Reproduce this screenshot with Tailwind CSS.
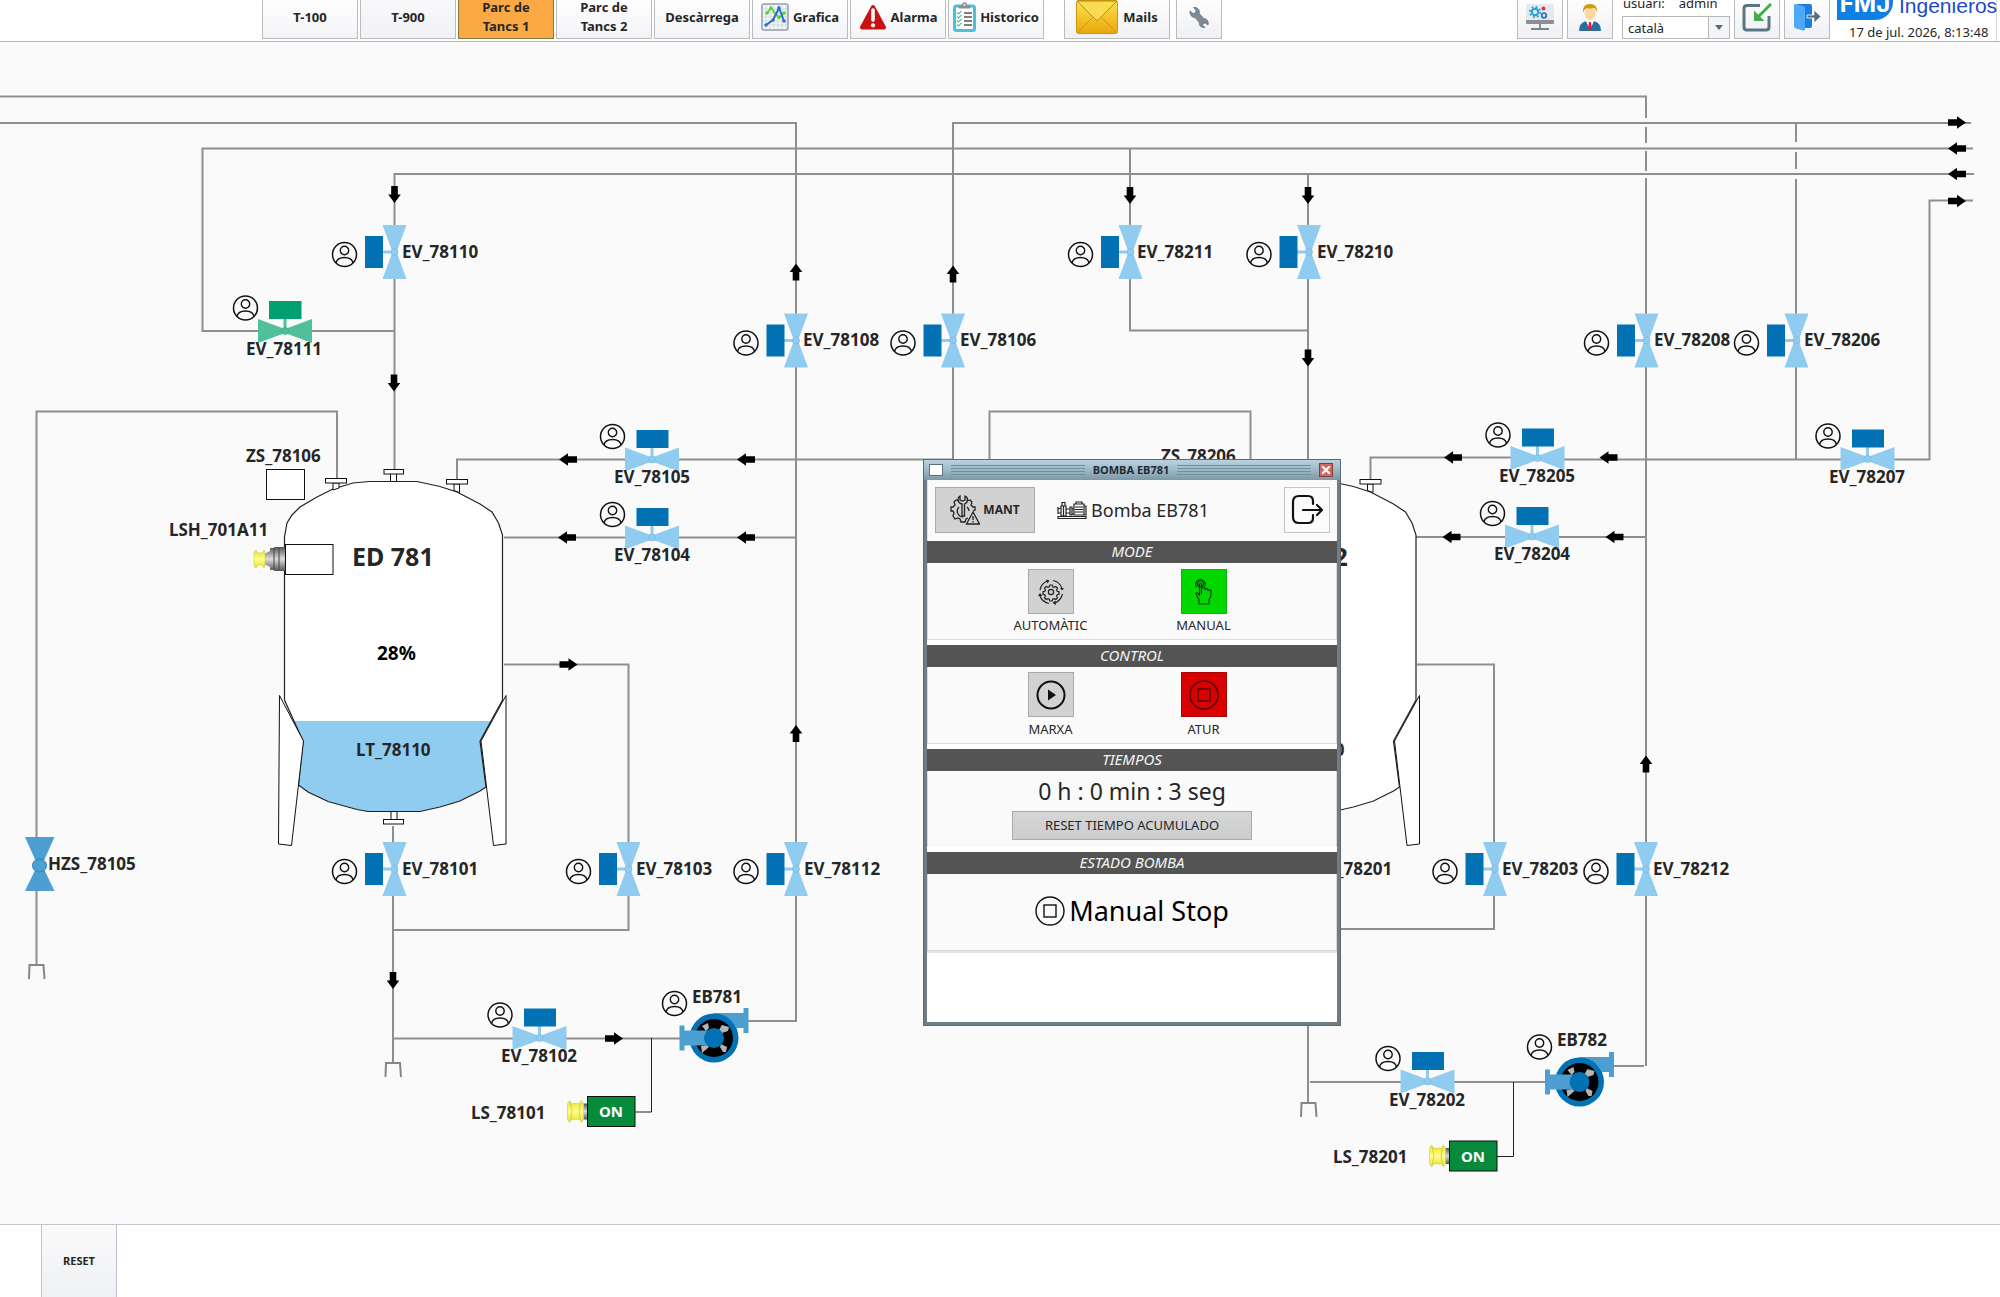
<!DOCTYPE html>
<html lang="ca">
<head>
  <meta charset="UTF-8" />
  <title>Parc de Tancs 1</title>
  <script src="https://cdn.jsdelivr.net/npm/@tailwindcss/browser@4"></script>
</head>
<body class="min-h-screen flex flex-col bg-[#fafafa] text-[#262626] font-['Noto_Sans',sans-serif] overflow-hidden">
  <!-- Top bar -->
  <header class="h-[42px] shrink-0 flex items-end bg-white border-b border-[#b4b6ba] pb-[2px] overflow-hidden">
    <nav class="flex items-end gap-[2px] pl-[262px] text-[13px] leading-[19px] font-bold">
      <button class="w-24 h-[44px] border border-[#b9bbbf] bg-linear-to-b from-white to-[#f3f4f7]">T-100</button>
      <button class="w-24 h-[44px] border border-[#b9bbbf] bg-linear-to-b from-[#fafafb] to-[#f0f1f5]">T-900</button>
      <button class="w-24 h-[44px] border border-[#7d7a3c] bg-[#fba945] px-4">Parc de Tancs 1</button>
      <button class="w-24 h-[44px] border border-[#b9bbbf] bg-linear-to-b from-white to-[#f3f4f7] px-4">Parc de Tancs 2</button>
      <button class="w-24 h-[44px] border border-[#b9bbbf] bg-linear-to-b from-white to-[#f3f4f7]">Descàrrega</button>
      <button class="w-24 h-[44px] border border-[#b9bbbf] bg-linear-to-b from-white to-[#f3f4f7] flex items-center justify-center gap-1">
        <svg class="w-7 h-7" viewBox="0 0 28 28" fill="none">
          <rect x="1" y="1" width="26" height="26" rx="2" fill="#f4f6f8" stroke="#8d9fae" stroke-width="1.5" />
          <path d="M5 2v24M9 2v24M13 2v24M17 2v24M21 2v24M25 2v24M2 6h24M2 10h24M2 14h24M2 18h24M2 22h24" stroke="#c9ced4" stroke-width=".7" />
          <path d="M6 10l4-5 8 10 5-5" stroke="#5bcf3a" stroke-width="2" />
          <path d="M5 22l7-5 6-12 5 13" stroke="#2b6fc9" stroke-width="2" />
          <g fill="#5bcf3a"><circle cx="6" cy="10" r="1.7" /><circle cx="10" cy="5" r="1.7" /><circle cx="18" cy="14" r="1.7" /><circle cx="23" cy="10" r="1.7" /></g>
          <g fill="#2b6fc9"><circle cx="5" cy="22" r="1.7" /><circle cx="12" cy="17" r="1.7" /><circle cx="18" cy="5" r="1.7" /><circle cx="23" cy="18" r="1.7" /></g>
        </svg>
        Grafica
      </button>
      <button class="w-24 h-[44px] border border-[#b9bbbf] bg-linear-to-b from-white to-[#f3f4f7] flex items-center justify-center gap-1">
        <svg class="w-7 h-7" viewBox="0 0 28 28">
          <path d="M14 4L25 24.500H3z" fill="#cc1012" stroke="#cc1012" stroke-width="4" stroke-linejoin="round" />
          <path d="M14 7v10" stroke="#fff" stroke-width="3.600" stroke-linecap="round" />
          <circle cx="14" cy="22.300" r="2.100" fill="#fff" />
        </svg>
        Alarma
      </button>
      <button class="w-24 h-[44px] border border-[#b9bbbf] bg-linear-to-b from-white to-[#f3f4f7] flex items-center justify-center gap-1">
        <svg class="w-[23px] h-[30px] shrink-0" viewBox="0 0 23 30" fill="none">
          <rect x="1.500" y="4" width="20" height="24.500" rx="2" fill="#fff" stroke="#4cbfd9" stroke-width="3" />
          <path d="M6 6V4h3l1-3h3l1 3h3v2z" fill="#8b8f94" stroke="#8b8f94" />
          <circle cx="11.500" cy="3" r="1" fill="#fff" />
          <path d="M11 11h8M11 15h8M11 19h8M11 23h8" stroke="#555" stroke-width="1.300" />
          <path d="M4 10.500l1.500 1.500 3-3M4 14.500l1.500 1.500 3-3M4 18.500l1.500 1.500 3-3M4 22.500l1.500 1.500 3-3" stroke="#52c3a2" stroke-width="1.200" />
        </svg>
        Historico
      </button>
      <button class="w-[106px] h-[44px] ml-[18px] border border-[#b9bbbf] bg-linear-to-b from-white to-[#f0f1f5] flex items-center justify-center gap-[5px]">
        <svg class="w-[42px] h-[34px] shrink-0" viewBox="0 0 42 34">
          <defs>
            <linearGradient id="mail" x1="0" y1="0" x2="0" y2="1"><stop offset="0" stop-color="#ffe14d" /><stop offset="1" stop-color="#e8a70c" /></linearGradient>
          </defs>
          <rect x=".500" y=".500" width="41" height="33" rx="2" fill="url(#mail)" stroke="#c9960e" />
          <path d="M1 33l15-15M41 33L26 18" stroke="#cf9a10" fill="none" />
          <path d="M1 1l19 19q1 .800 2 0L41 1z" fill="#f9dc52" stroke="#b98c0c" />
        </svg>
        Mails
      </button>
      <button aria-label="Configuració" class="w-[46px] h-[44px] ml-1 border border-[#b9bbbf] bg-linear-to-b from-white to-[#eff0f4] flex items-center justify-center">
        <svg class="w-[22px] h-[22px]" viewBox="0 0 22 22">
          <path d="M2 5l3 2.500 2.500-.500.500-2.500L5.500 1.500Q9 .500 11 4q.600 1.500.300 3.500l4.500 5q2.200 0 3.700 2 1.300 2 .500 4.500l-2.800-2-2 .500-.600 2 2.400 2q-3 .500-4.800-1.500-1.200-1.600-.900-3.500L7 11.500Q4.500 11.500 3 9.500 1.500 7.500 2 5z" fill="#7e8a96" stroke="#5d6873" stroke-width=".7" />
        </svg>
      </button>
    </nav>
    <div class="ml-auto flex items-end">
      <div class="flex items-end gap-1 mr-[9px]">
        <button aria-label="Sistema" class="w-[46px] h-[44px] border border-[#b9bbbf] bg-linear-to-b from-white to-[#eff0f4] flex items-center justify-center">
          <svg class="w-[30px] h-[26px]" viewBox="0 0 30 26" fill="none">
            <rect x="1" y="0" width="28" height="17" rx="1" fill="#e6e8eb" />
            <rect x="1" y="16" width="28" height="4" rx="1" fill="#8c8f93" />
            <path d="M15 20v4M6 25h18" stroke="#7d8084" stroke-width="1.800" />
            <circle cx="10" cy="8" r="3.200" stroke="#20a0e0" stroke-width="2" />
            <circle cx="10" cy="8" r="5.200" stroke="#20a0e0" stroke-width="1.800" stroke-dasharray="1.800 2.280" />
            <circle cx="19" cy="11.500" r="2.300" stroke="#2d79b5" stroke-width="1.800" />
            <circle cx="18.500" cy="4.500" r="2" fill="#e0323c" />
          </svg>
        </button>
        <button aria-label="Usuari" class="w-[46px] h-[44px] border border-[#b9bbbf] bg-linear-to-b from-white to-[#eff0f4] flex items-center justify-center">
          <svg class="w-6 h-7" viewBox="0 0 24 28">
            <path d="M1 28q0-8 6-9.500l5-1.500 5 1.500q6 1.500 6 9.500z" fill="#2b6ca5" />
            <path d="M8 18l4 9 4-9-4-3z" fill="#fff" />
            <path d="M11 19h2l1 7-2 2-2-2z" fill="#d8282f" />
            <ellipse cx="12" cy="10" rx="5.500" ry="7" fill="#fcd9a0" />
            <path d="M5 10Q4 1 12 1t7 9q-1-5-4-5-3 1-6 0-3 1-4 5z" fill="#d39a10" />
          </svg>
        </button>
      </div>
      <div class="w-[108px] text-[13px]">
        <div class="flex gap-[14px] leading-[16px] h-[21px] pl-[1px]"><span>usuari:</span><span>admin</span></div>
        <label for="lang" class="sr-only">Idioma</label>
        <div class="relative">
          <select id="lang" class="appearance-none block w-full h-[23px] border border-[#b5b7bb] bg-white pl-[5px] pt-px leading-[18px]">
            <option>català</option>
            <option>castellano</option>
          </select>
          <span class="absolute right-px top-px w-[21px] h-[21px] border-l border-[#b5b7bb] bg-[#f3f5f9] flex items-center justify-center pointer-events-none">
            <svg class="w-2 h-[5px]" viewBox="0 0 8 5"><path d="M0 0h8L4 5z" fill="#5a6c7a" /></svg>
          </span>
        </div>
      </div>
      <div class="flex items-end gap-1 ml-1">
        <button aria-label="Minimitza" class="w-[46px] h-[44px] border border-[#b9bbbf] bg-linear-to-b from-white to-[#eff0f4] flex items-center justify-center">
          <svg class="w-[30px] h-[30px]" viewBox="0 0 30 30" fill="none">
            <path d="M18 3.500H5q-3 0-3 3V25q0 3 3 3h19q3 0 3-3V14" stroke="#5b7681" stroke-width="3" />
            <path d="M29 2L17 14" stroke="#43ab48" stroke-width="3" />
            <path d="M12 8.500l10.500 10.500H12z" fill="#43ab48" />
          </svg>
        </button>
        <button aria-label="Surt" class="w-[46px] h-[44px] border border-[#b9bbbf] bg-linear-to-b from-white to-[#eff0f4] flex items-center justify-center">
          <svg class="w-[30px] h-[30px]" viewBox="0 0 30 30" fill="none">
            <path d="M5 2h13q2 0 2 2v20q0 2-2 2H5z" fill="#1a7fe0" />
            <path d="M2 3q0-1 1-1l8 2q2 .500 2 2v21q0 2-2 1.500l-7-2q-2-.500-2-2z" fill="#4fa9fb" />
            <path d="M15 13h7V8l7 6.500-7 6.500v-5h-7z" fill="#54707c" stroke="#fff" stroke-width=".8" />
          </svg>
        </button>
      </div>
      <div class="w-[160px] ml-[7px] mr-[3px] -mb-[2px] h-[42px] flex flex-col justify-between border-r border-[#d5d6d9]">
        <div class="h-[21px] flex items-end whitespace-nowrap">
          <span class="w-[56px] h-10 shrink-0 rounded-br-[18px] bg-[#0f7fe3] text-white text-[24px] font-bold font-[Inter,sans-serif] flex items-end justify-center"><span class="block leading-[32px]">FMJ</span></span>
          <span class="pl-[6px] text-[#1d49c8] text-[21px] leading-[28px] font-['Liberation_Sans_Narrow','Liberation_Sans',sans-serif]">Ingenieros</span>
        </div>
        <div class="pl-3 text-[13px] leading-[17px] whitespace-nowrap">17 de jul. 2026, 8:13:48</div>
      </div>
    </div>
  </header>

  <!-- Process diagram -->
  <main class="relative flex-1">
    <svg class="block w-full" viewBox="0 42 2000 1182" fill="none">
      <defs>
        <g id="user">
          <circle r="12" stroke="#111" stroke-width="1.500" />
          <circle cy="-4" r="4.200" stroke="#111" stroke-width="1.400" />
          <path d="M-8.500 8.500Q-7.500 3 0 3t8.500 5.500" stroke="#111" stroke-width="1.400" />
        </g>
        <!-- valve on a vertical pipe -->
        <g id="valve-v">
          <path d="M-12-27h24L2 0l10 27h-24L-2 0z" fill="#90ccef" />
          <path d="M-13 0H-3" stroke="#90ccef" stroke-width="3" />
          <circle r="3.500" fill="#90ccef" stroke="#6db3de" stroke-width=".6" />
          <rect x="-29.500" y="-16" width="18" height="32" fill="#0272b4" />
          <use href="#user" x="-50" y="2.500" />
        </g>
        <!-- valve on a horizontal pipe -->
        <g id="valve-h">
          <path d="M-27-12v24L0 2l27 10v-24L0-2z" fill="#90ccef" />
          <path d="M0-13V-3" stroke="#90ccef" stroke-width="3" />
          <circle r="3.500" fill="#90ccef" stroke="#6db3de" stroke-width=".6" />
          <rect x="-15.500" y="-29.500" width="32" height="18" fill="#0272b4" />
          <use href="#user" x="-39.500" y="-23" />
        </g>
        <path id="arr-r" d="M-9-3.300H0V-6.300L9 0 0 6.300V3.300H-9z" fill="#000" />
        <path id="arr-l" d="M9-3.300H0V-6.300L-9 0 0 6.300V3.300H9z" fill="#000" />
        <path id="arr-d" d="M-3.300-8.500V0H-6.300L0 8.500 6.300 0H3.300V-8.500z" fill="#000" />
        <path id="arr-u" d="M-3.300 8.500V0H-6.300L0-8.500 6.300 0H3.300V8.500z" fill="#000" />
        <g id="pump">
          <rect x="0" y="-25" width="31" height="15" fill="#4e9fd1" />
          <rect x="29.500" y="-30" width="5" height="25" fill="#4e9fd1" />
          <circle r="24.500" fill="#0272b4" />
          <path d="M8-25H30V-10H22Q18-20 8-25z" fill="#4e9fd1" />
          <circle r="19" fill="#000" />
          <g fill="#b4b4b4">
            <path d="M-12-12l6-3 1 5-3 3z" /><path d="M5-8l3-5 7 2-1 4-6 2z" /><path d="M7 6l6 3-1 5-3 0-3-5z" /><path d="M-13 8l6-1 2 2-7 6z" />
          </g>
          <rect x="-30" y="-7.500" width="30" height="15" fill="#4e9fd1" />
          <rect x="-34.500" y="-12.500" width="5" height="25" fill="#4e9fd1" />
          <circle r="10" fill="#0272b4" />
        </g>
        <linearGradient id="metal" x1="0" y1="0" x2="0" y2="1"><stop offset="0" stop-color="#555" /><stop offset=".5" stop-color="#ddd" /><stop offset="1" stop-color="#555" /></linearGradient>
        <linearGradient id="cap" x1="0" y1="0" x2="0" y2="1"><stop offset="0" stop-color="#e6e02c" /><stop offset=".5" stop-color="#ffff8c" /><stop offset="1" stop-color="#e6e02c" /></linearGradient>
        <g id="level-switch">
          <rect x="-4" y="-8" width="4" height="16" fill="url(#metal)" />
          <path d="M-20-8l2-3 2 3h8l2-3 2 3v16l-2 3-2-3h-8l-2 3-2-3z" fill="url(#cap)" stroke="#c8c43c" stroke-width=".5" />
          <path d="M-17-8q3 8 0 16M-7-8q-3 8 0 16" stroke="#c8c43c" stroke-width=".8" />
          <rect x="0" y="-15" width="47.500" height="30" fill="#068a3b" stroke="#111" />
        </g>
        <path id="drain" d="M-7.500 14L-7 0H7l1 14" stroke="#868686" stroke-width="2" />
        <path id="tank-body" d="M369 481.500H417L440 486.500 457 492 480 504 492 512 498.500 523 502.500 535V700L480 741 486 787 480 791 460 801 440 807 420 811.500H368L357 809.500 328 801.500 308 792 298.500 785 303 741 284.500 700V537L287 523 292 515 300 507 317 497 333 489 353 483z" />
        <g id="tank-parts" stroke="#111" fill="#fff">
          <path d="M279.500 695.500L303.500 741 291.500 845.500 278.500 844zM506 695.500L481 741 493.500 845.500 506 844z" />
          <rect x="390.500" y="473.500" width="6" height="8" /><rect x="384" y="469.500" width="19.500" height="4.500" />
          <path d="M333 483v7l6-2v-5zM454 484v6.500l5.500 2v-8.500z" />
          <rect x="325.500" y="478.500" width="21" height="4.500" /><rect x="446.500" y="479.500" width="21" height="4.500" />
          <rect x="391" y="811.500" width="6" height="8" /><rect x="383.500" y="819.500" width="20" height="4.500" />
        </g>
      </defs>

      <!-- pipes -->
      <g stroke="#8e8e8e" stroke-width="2">
        <path d="M0 96.500H1646V118M1646 127V143M1646 151V171M1646 178V1066M1614 1066H1644" />
        <path d="M0 123H796V1021H748" />
        <path d="M1971 123H953V459" />
        <path d="M1973 148.500H202.500V331H394.500M1130 148.500V330.500H1308" />
        <path d="M1974 174H394.500V470M1308 174V1103" />
        <path d="M1796 123V142M1796 152V169M1796 179V459" />
        <path d="M1973 200.500H1929.500V459.500H1560" />
        <path d="M1540 457.500H1370.500V479" />
        <path d="M953 459.500H457V479" />
        <path d="M36.500 837V411.500H337V478M36.500 891V965" />
        <path d="M989.500 470V411.500H1250.500V470" />
        <path d="M504 537.500H796M1415 537H1646" />
        <path d="M504 664.500H628.500V930H393" />
        <path d="M393 826V1063M393 1038.500H682" />
        <path d="M1417 664.500H1494V929H1308M1310 1082H1546" />
      </g>
      <path d="M651.500 1038V1112H635M1513.500 1082V1156.500H1497" stroke="#222" />
      <use href="#drain" x="36.500" y="965" /><use href="#drain" x="393" y="1063" /><use href="#drain" x="1308.500" y="1103" />

      <!-- tank ED 781 -->
      <use href="#tank-body" fill="#fff" />
      <path d="M292.500 721H493L481 741 486 787 480 791 460 801 440 807 420 811.500H368L357 809.500 328 801.500 308 792 298.500 785 303 741z" fill="#90ccef" />
      <use href="#tank-body" stroke="#222" stroke-width="1.200" />
      <use href="#tank-parts" />
      <!-- tank ED 782 -->
      <use href="#tank-body" x="913.500" fill="#fff" stroke="#222" stroke-width="1.200" />
      <use href="#tank-parts" x="913.500" />

      <rect x="266.500" y="469.500" width="38" height="30" fill="#fff" stroke="#111" />
      <path d="M264 554l6-3V548h4v-1h11v24H274v-1h-4v-3l-6-3z" fill="url(#metal)" />
      <path d="M274 548v22M279 548v22" stroke="#444" />
      <path d="M254 552l2-2 2 3h4l2-3 1 2v14l-1 2-2-3h-4l-2 3-2-2z" fill="url(#cap)" stroke="#c8c43c" stroke-width=".5" />
      <rect x="285.500" y="544.500" width="47.500" height="30" fill="#fff" stroke="#111" />

      <!-- flow direction -->
      <use href="#arr-r" x="1957" y="122.500" /><use href="#arr-l" x="1957" y="148.500" /><use href="#arr-l" x="1957" y="174" /><use href="#arr-r" x="1957" y="201" />
      <use href="#arr-d" x="394.500" y="194.500" /><use href="#arr-d" x="394" y="383" /><use href="#arr-d" x="1130" y="195.500" /><use href="#arr-d" x="1308" y="195.500" /><use href="#arr-d" x="1308" y="358" /><use href="#arr-d" x="393" y="980.500" />
      <use href="#arr-u" x="796" y="272" /><use href="#arr-u" x="953" y="274" /><use href="#arr-u" x="796" y="733.500" /><use href="#arr-u" x="1646" y="764" />
      <use href="#arr-l" x="568" y="459.500" /><use href="#arr-l" x="746" y="459.500" /><use href="#arr-l" x="567" y="537.500" /><use href="#arr-l" x="746" y="537.500" />
      <use href="#arr-l" x="1453" y="457.500" /><use href="#arr-l" x="1608.500" y="457.500" /><use href="#arr-l" x="1451.500" y="537" /><use href="#arr-l" x="1614.500" y="537" />
      <use href="#arr-r" x="568.500" y="664.500" /><use href="#arr-r" x="614" y="1038.500" />

      <!-- valves -->
      <use href="#valve-v" x="394.500" y="252" /><use href="#valve-v" x="796" y="340.500" /><use href="#valve-v" x="953" y="340.500" />
      <use href="#valve-v" x="1130.500" y="252" /><use href="#valve-v" x="1309" y="252" /><use href="#valve-v" x="1646.500" y="340.500" /><use href="#valve-v" x="1796.500" y="340.500" />
      <use href="#valve-v" x="394.500" y="869" /><use href="#valve-v" x="628.500" y="869" /><use href="#valve-v" x="796" y="869" />
      <use href="#valve-v" x="1308.500" y="869" /><use href="#valve-v" x="1495" y="869" /><use href="#valve-v" x="1646" y="869" />
      <use href="#valve-h" x="652" y="459.500" /><use href="#valve-h" x="652" y="537.500" /><use href="#valve-h" x="1537.500" y="458" /><use href="#valve-h" x="1532" y="536.500" />
      <use href="#valve-h" x="1867.500" y="459" /><use href="#valve-h" x="539.500" y="1038" /><use href="#valve-h" x="1427.500" y="1081.500" />
      <!-- EV_78111 is open -->
      <path d="M258 319v24l27-10 27 10v-24l-27 10z" fill="#4fc09b" />
      <path d="M285 318v10" stroke="#4fc09b" stroke-width="3" />
      <circle cx="285" cy="331" r="3.500" fill="#4fc09b" stroke="#2ba680" stroke-width=".6" />
      <rect x="269" y="301" width="32.500" height="18" fill="#029f73" />
      <use href="#user" x="245.500" y="308" />
      <!-- manual valve -->
      <path d="M25 837h29.500L42 865l12.500 26H25l12.500-26z" fill="#4e9fd1" />
      <ellipse cx="39.500" cy="865.500" rx="7" ry="6.500" fill="#4e9fd1" stroke="#1f83c2" />

      <use href="#pump" x="714" y="1038" /><use href="#user" x="674.500" y="1003.500" />
      <use href="#pump" x="1579.500" y="1082" /><use href="#user" x="1539.500" y="1047" />
      <use href="#level-switch" x="587.500" y="1111.500" /><use href="#level-switch" x="1449.500" y="1156" />

      <!-- tags -->
      <g class="fill-[#262626] text-[17px] font-bold">
        <text x="402" y="258">EV_78110</text><text x="803" y="346">EV_78108</text><text x="960" y="346">EV_78106</text>
        <text x="1137" y="258">EV_78211</text><text x="1317" y="258">EV_78210</text><text x="1654" y="346">EV_78208</text><text x="1804" y="346">EV_78206</text>
        <text x="402" y="875">EV_78101</text><text x="636" y="875">EV_78103</text><text x="804" y="875">EV_78112</text>
        <text x="1316" y="875">EV_78201</text><text x="1502" y="875">EV_78203</text><text x="1653" y="875">EV_78212</text>
        <text x="48" y="870">HZS_78105</text>
        <g text-anchor="middle">
          <text x="284" y="355">EV_78111</text><text x="652" y="483">EV_78105</text><text x="652" y="561">EV_78104</text>
          <text x="1537" y="482">EV_78205</text><text x="1532" y="560">EV_78204</text><text x="1867" y="483">EV_78207</text>
          <text x="539" y="1062">EV_78102</text><text x="1427" y="1106">EV_78202</text>
        </g>
        <text x="246" y="462">ZS_78106</text><text x="1161" y="462">ZS_78206</text><text x="169" y="536">LSH_701A11</text>
        <text x="356" y="756">LT_78110</text><text x="1270" y="756">LT_78210</text>
        <text x="471" y="1119">LS_78101</text><text x="1333" y="1163">LS_78201</text>
        <text x="692" y="1003">EB781</text><text x="1557" y="1046">EB782</text>
      </g>
      <g class="fill-[#262626] text-[25px] font-bold"><text x="352" y="566">ED 781</text><text x="1266" y="566">ED 782</text></g>
      <text class="fill-black text-[19px] font-bold" x="377" y="660">28%</text>
      <g class="fill-white text-[15px] font-bold" text-anchor="middle"><text x="611" y="1117">ON</text><text x="1473" y="1162">ON</text></g>
    </svg>

    <!-- pump faceplate window -->
    <section aria-label="BOMBA EB781" class="absolute left-[923px] top-[417px] w-[418px] h-[567px] flex flex-col bg-[#6f7e84] border border-[#5c696f] px-[3px] pb-[3px]">
      <div class="h-[20px] shrink-0 -mx-[3px] px-[5px] flex items-center gap-2 bg-linear-to-b from-[#b9d2e0] via-[#9db9c8] to-[#7d97a5]">
        <span class="w-[14px] h-3 bg-white border border-[#5c6f7a]"></span>
        <span class="flex-1 h-3 flex flex-col justify-between py-px"><i class="h-px bg-[#6f8fa3]"></i><i class="h-px bg-[#6f8fa3]"></i><i class="h-px bg-[#6f8fa3]"></i><i class="h-px bg-[#6f8fa3]"></i></span>
        <h1 class="text-[11px] leading-[18px] font-bold text-[#1d2b33]">BOMBA EB781</h1>
        <span class="flex-1 h-3 flex flex-col justify-between py-px"><i class="h-px bg-[#6f8fa3]"></i><i class="h-px bg-[#6f8fa3]"></i><i class="h-px bg-[#6f8fa3]"></i><i class="h-px bg-[#6f8fa3]"></i></span>
        <button aria-label="Tanca" class="w-[14px] h-[14px] mr-[2px] bg-[#cf6a66] border border-[#8c3a38] flex items-center justify-center">
          <svg class="w-2 h-2" viewBox="0 0 8 8"><path d="M0 0l8 8M8 0L0 8" stroke="#fff" stroke-width="2" /></svg>
        </button>
      </div>
      <div class="h-[61px] shrink-0 flex items-start justify-between bg-[#fafafa] border-l border-[#dfe1e5] pt-[7px] px-[7px]">
        <button class="w-[100px] h-[46px] border border-[#a9a9a9] bg-[#d2d2d2] flex items-center justify-center gap-[3px] text-[12px] font-bold">
          <svg class="w-[30px] h-[30px]" viewBox="0 0 30 30" fill="none" stroke="#222" stroke-width="1.300">
            <path d="M9 6l-3-1-2 2 1 3-2 2H1v4h2l1 2-1 3 2 3 3-1 2 1 1 3h4l1-3 2-1M17 6l3-1 2 2-1 3 2 2h2v3l-2 1" />
            <path d="M12 21V9q-4-1-4-4.500 0-2.500 2-3.500v4l2.500 1L15 5V1q2.500 1 2.500 3.500Q17.500 8 14.500 9v12z" />
            <path d="M9 12q-3 3-1 7 2 3 5 3M17 12q2 2 2 4" />
            <path d="M23 17l6.500 12h-13z" fill="#d2d2d2" /><path d="M23 21v4M23 26v1.500" />
          </svg>
          MANT
        </button>
        <div class="h-[46px] flex items-center gap-1 text-[18px] mr-[53px]">
          <svg class="w-[30px] h-[18px]" viewBox="0 0 30 18" fill="none" stroke="#222" stroke-width="1.200">
            <path d="M1 15.500h28v2H1zM1 6v7M1 7.500h3M1 12h3M4 5h5v10H4zM5 5V1.500h3V5M6.500 5v10M9 8h4M9 12h4M13 6v8h2V6zM15 8h2v5h-2M17 3h10v11H17zM19 3V1h6v2M18 6h8M18 8.500h8M18 11h8M27 5h2v9h-2" />
          </svg>
          <span>Bomba EB781</span>
        </div>
        <button aria-label="Sortir" class="w-[46px] h-[46px] border border-[#c2c4c8] bg-[#fbfbfc] flex items-center justify-center">
          <svg class="w-8 h-8" viewBox="0 0 32 32" fill="none" stroke="#111" stroke-width="2.200" stroke-linecap="round" stroke-linejoin="round">
            <path d="M22 10V7q0-5-5-5H8Q2 2 2 8v15q0 6 6 6h9q5 0 5-5v-3M12 16h18M26 11l5 5-5 5" />
          </svg>
        </button>
      </div>

      <h2 class="h-[22px] shrink-0 bg-[#545454] text-[#f4f4f4] text-[15px] leading-[21px] italic text-center">MODE</h2>
      <div class="h-[77px] shrink-0 bg-[#fafafa] border border-t-0 border-[#d8dadd] flex justify-center pr-[10px] pt-[6px] text-[13px] leading-[18px]">
        <div class="w-[153px] flex flex-col items-center gap-0.5">
          <button aria-labelledby="auto-l" class="w-[46px] h-[45px] shrink-0 border border-[#a9a9a9] bg-[#d2d2d2] flex items-center justify-center">
            <svg class="w-[26px] h-[26px]" viewBox="0 0 26 26" fill="none" stroke="#222" stroke-width="1.200">
              <circle cx="13" cy="13" r="2.600" />
              <path d="M11.800 6h2.400l.500 1.800 1.400.600 1.700-.900 1.700 1.700-.900 1.700.600 1.400 1.800.500v2.400l-1.800.500-.600 1.400.900 1.700-1.700 1.700-1.700-.900-1.400.600-.500 1.800h-2.400l-.500-1.800-1.400-.600-1.700.900-1.700-1.700.900-1.700-.600-1.400L5 15.200v-2.400l1.800-.500.600-1.400-.900-1.700 1.700-1.700 1.700.900 1.400-.600z" />
              <path d="M2 11Q3.500 4 9.500 2M15 1.500Q22 3 24 9.500M24.500 15Q22.500 22 17 24M11 24.500Q4 23 2 17" />
              <path d="M8 .500l3.500 1-2 3zM22 9h4l-2 2.500zM18 26l-3.500-2 3-2.500zM0 17l2-3 2.500 3z" fill="#222" stroke="none" />
            </svg>
          </button>
          <span id="auto-l">AUTOMÀTIC</span>
        </div>
        <div class="w-[153px] flex flex-col items-center gap-0.5">
          <button aria-labelledby="manual-l" class="w-[46px] h-[45px] shrink-0 border border-[#0eb30e] bg-[#00d800] flex items-center justify-center">
            <svg class="w-[18px] h-[26px]" viewBox="0 0 18 26" fill="none" stroke="#0b3d0b" stroke-width="1.200">
              <path d="M6.500 15V6q0-1.500-1.200-1.500T4.500 6v10l-2-2q-1-.500-1.500.500 0 1 3 6v4.500h10V21q2-3 2-6v-3q0-1.500-1.200-1.500T13 12v-1q0-1.500-1.500-1.500T10 11v-1q0-1.500-1.500-1.500T6.500 10" />
              <circle cx="5.500" cy="5" r="3" /><path d="M1.500 8Q-.500 5 2 2.200q3.500-3 7 0Q11.500 5 9.500 7.500" />
            </svg>
          </button>
          <span id="manual-l">MANUAL</span>
        </div>
      </div>

      <h2 class="h-[22px] shrink-0 mt-[5px] bg-[#545454] text-[#f4f4f4] text-[15px] leading-[21px] italic text-center shadow-[0_-5px_0_#fff]">CONTROL</h2>
      <div class="h-[77px] shrink-0 bg-[#fafafa] border border-t-0 border-[#d8dadd] flex justify-center pr-[10px] pt-[5px] text-[13px] leading-[18px]">
        <div class="w-[153px] flex flex-col items-center gap-[3px]">
          <button aria-labelledby="marxa-l" class="w-[46px] h-[45px] shrink-0 border border-[#a9a9a9] bg-[#d2d2d2] flex items-center justify-center">
            <svg class="w-[30px] h-[30px]" viewBox="0 0 30 30"><circle cx="15" cy="15" r="13.500" fill="none" stroke="#111" stroke-width="2" /><path d="M12 9.500l8 5.500-8 5.500z" fill="#111" /></svg>
          </button>
          <span id="marxa-l">MARXA</span>
        </div>
        <div class="w-[153px] flex flex-col items-center gap-[3px]">
          <button aria-labelledby="atur-l" class="w-[46px] h-[45px] shrink-0 border border-[#a80505] bg-[#d80000] flex items-center justify-center">
            <svg class="w-[30px] h-[30px]" viewBox="0 0 30 30" fill="none" stroke="#4a0000" stroke-width="1.400"><circle cx="15" cy="15" r="14" /><rect x="9" y="9" width="12" height="12" /></svg>
          </button>
          <span id="atur-l">ATUR</span>
        </div>
      </div>

      <h2 class="h-[22px] shrink-0 mt-[5px] bg-[#545454] text-[#f4f4f4] text-[15px] leading-[21px] italic text-center shadow-[0_-5px_0_#fff]">TIEMPOS</h2>
      <div class="h-[77px] shrink-0 bg-[#fafafa] border border-t-0 border-[#d8dadd] flex flex-col items-center pt-[3px]">
        <p class="text-[23px] leading-[34px] mb-[3px]">0 h : 0 min : 3 seg</p>
        <button class="w-[240px] h-[29px] border border-[#a9a9a9] bg-linear-to-b from-[#d6d6d6] to-[#cbcdd0] text-[13px]">RESET TIEMPO ACUMULADO</button>
      </div>

      <h2 class="h-[22px] shrink-0 mt-[4px] bg-[#545454] text-[#f4f4f4] text-[15px] leading-[21px] italic text-center shadow-[0_-5px_0_#fff]">ESTADO BOMBA</h2>
      <div class="h-[77px] shrink-0 bg-[#fafafa] border border-t-0 border-[#d8dadd] flex items-center justify-center gap-1 pb-[3px] text-black">
        <svg class="w-[30px] h-[30px]" viewBox="0 0 30 30" fill="none" stroke="#111" stroke-width="1.400"><circle cx="15" cy="15" r="14" /><rect x="9" y="9" width="12" height="12" /></svg>
        <span class="text-[27px] leading-[38px]">Manual Stop</span>
      </div>
      <div class="flex-1 bg-white border-t-2 border-[#e2e3e6]"></div>
    </section>
  </main>

  <!-- Bottom bar -->
  <footer class="h-[73px] shrink-0 flex bg-white border-t border-[#c0c4cf] pl-[41px]">
    <button class="w-[76px] border-x border-[#c0c4cf] bg-linear-to-b from-[#fafafb] to-[#eff1f4] text-[11px] font-bold">RESET</button>
  </footer>
</body>
</html>
